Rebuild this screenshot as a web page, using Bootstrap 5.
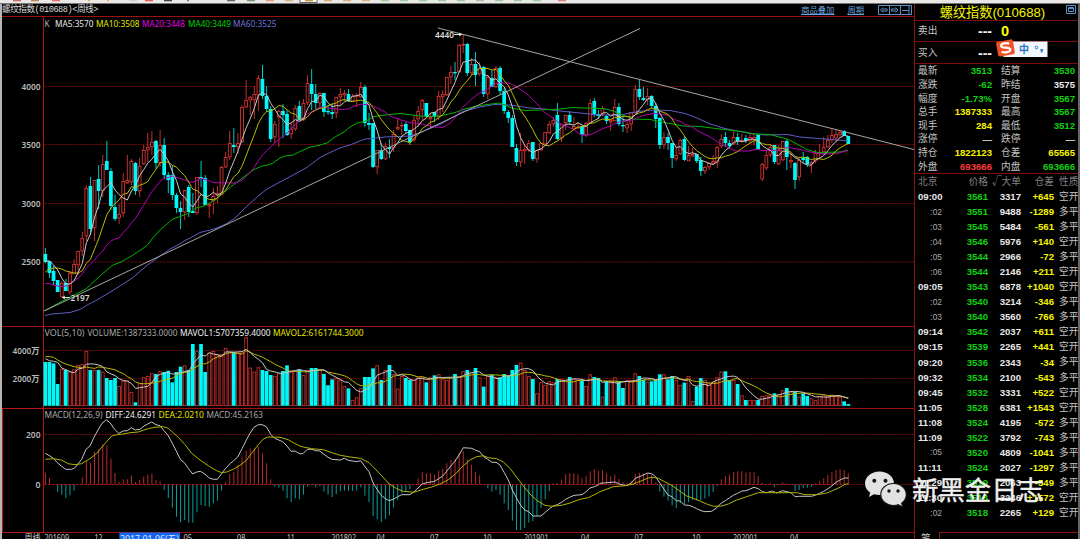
<!DOCTYPE html>
<html lang="zh-CN">
<head>
<meta charset="utf-8">
<title>螺纹指数(010688)</title>
<link href="https://cdn.jsdelivr.net/npm/bootstrap@5.3.0/dist/css/bootstrap.min.css" rel="stylesheet">
<script src="https://cdn.jsdelivr.net/npm/bootstrap@5.3.0/dist/js/bootstrap.bundle.min.js"></script>
<style>
html,body{width:1080px;height:539px;overflow:hidden;background:#000}
body{font-family:"Liberation Sans","Noto Sans CJK SC",sans-serif;font-size:10px;line-height:1;color:#c4c4c4}
.tools{height:4px;background:#e9e8e7;border-bottom:1px solid #777}
.tools svg{display:block}
.main{height:535px}
.pane{width:914px;border-left:2px solid #b8b4b0}
.pane-head{height:12px;font-size:9px;padding:1px 1px 0 0;white-space:nowrap}
.pane-head .ttl{font-family:"Liberation Mono","Noto Sans CJK SC",monospace;font-size:8.6px;color:#d8d8d8;letter-spacing:-.45px;line-height:11px}
.pane-head .lnk{color:#6ba4dc;text-decoration:underline;text-underline-offset:1px;line-height:10px;font-size:8.3px}
.pane-head .lnk2{margin:0 14px 0 13px}
.side{width:166px;border-left:1px solid #901010;border-right:2px solid #66666a}
.cjk{font-family:"Noto Sans CJK SC",sans-serif;font-weight:400;font-size:9.7px}
.side-title{height:17px;color:#f4f400;font-size:13.2px;border-bottom:1px solid #7c0d0d;line-height:17px;padding-right:8px;white-space:nowrap}
.offer{height:21.4px;border-bottom:1px solid #7c0d0d;padding-left:3px}
.offer .lab{width:45px}
.offer .dash{width:29px;text-align:right;color:#eee;font-weight:bold;font-size:14px;line-height:10px}
.offer .qty{color:#ff0;font-size:14.5px;font-weight:bold;padding-left:9px}
.quotes{height:110.5px;padding-top:.5px;border-bottom:1px solid #7c0d0d}
.qrow{display:grid;grid-template-columns:26px 48px 9px 26px 48px;height:13.65px;align-items:center;padding-left:3px;white-space:nowrap}
.num{font-weight:bold;font-size:9.6px;text-align:right}
.trow,.thead{display:grid;grid-template-columns:24px 46px 33px 33px 5px 22px;height:15.05px;align-items:center;padding-left:3px;white-space:nowrap}
.thead{height:15px;color:#808080}
.thead .sorted{margin-left:-3px}
.g{color:#10d010}.y{color:#f6f600}.w{color:#e8e8e8}.r{color:#ff3a3a}
.sec{font-size:8.4px;color:#aaa;text-align:right;font-weight:normal}
.foot{height:7px;overflow:hidden;margin-top:auto}
.foot .tab1{width:25px;border-right:1px solid #901010;padding-left:6px;line-height:12px;font-size:10px}
.foot .tab2{border-top:1px solid #901010}
.ime{position:absolute;left:995px;top:38px}
.brand{position:absolute;left:864px;top:469px;color:#f0f0f0}
.brand span{font-family:"Noto Sans CJK SC",sans-serif;font-weight:400;font-size:26.4px;line-height:40px;white-space:nowrap;margin-left:4px;-webkit-text-stroke:.35px #f0f0f0}
.win{position:absolute;right:1px;top:1px}
svg text{font-family:"Noto Sans","Noto Sans CJK SC",sans-serif}
</style>
</head>
<body class="d-flex flex-column position-relative">
<div class="tools"><svg id="tools" width="1080" height="3"></svg></div>
<div class="main d-flex">
  <div class="pane d-flex flex-column">
    <div class="pane-head d-flex align-items-start">
      <span class="ttl">螺纹指数(010688)&lt;周线&gt;</span>
      <span class="lnk ms-auto">商品叠加</span><span class="lnk lnk2">周期</span>
      <svg width="35" height="10" fill="none" stroke="#5d92c4" stroke-width="1"><path d="M.5.5h11v9H.5zM11.500.5h11v9h-11zM22.500.5h11v9h-11z"/><path d="M5 2.500 2.500 5 5 7.500M4 4h5v2H4M17.500 2.500 20 5 17.500 7.500M18.500 4h-5v2h5M24 5.500h6.500M31 1v8"/></svg>
    </div>
    <svg id="chart" width="912" height="523" viewBox="2 16 912 523"></svg>
  </div>
  <div class="side d-flex flex-column position-relative">
    <div class="side-title text-center">螺纹指数(010688)</div>
    <svg class="win" width="11" height="11" fill="none" stroke="#5d92c4"><path d="M.5.5h9v8h-9zM2.500 2.500h5v4h-5zM2.500 3.500h5"/></svg>
    <div class="offer d-flex align-items-center"><span class="lab cjk">卖出</span><span class="dash">---</span><span class="qty">0</span></div>
    <div class="offer d-flex align-items-center"><span class="lab cjk">买入</span><span class="dash">---</span><span class="qty">0</span></div>
    <div class="quotes" id="quotes"></div>
    <div class="thead cjk"><span>北京</span><span class="text-end">价格</span><span class="text-end sorted">√大单</span><span class="text-end">仓差</span><span></span><span>性质</span></div>
    <div id="trades"></div>
    <div class="foot d-flex"><div class="tab1 cjk">笔</div><div class="tab2 flex-grow-1"></div></div>
  </div>
</div>
<svg class="ime" width="54" height="22" viewBox="0 0 54 22"><path d="M10 3.500h42.500v15.500H10z" fill="#f4f7fb"/><g transform="rotate(-10 10 10)"><rect x="2" y="2.500" width="17" height="15" rx="2" fill="#ef5227"/><path d="M15 6.500C12 4.500 6.500 4.800 6.500 7.500c0 3 8.500 1.700 8.500 4.600 0 3-6.500 2.800-9 1" fill="none" stroke="#fff" stroke-width="2.200"/></g><text x="24" y="14.500" font-size="10" font-weight="700" fill="#2478c4">中</text><circle cx="41.500" cy="9.500" r="1.300" fill="none" stroke="#2478c4"/><path d="M45.500 11h2.500c.3 2-.5 3.500-2 4l-.3-1 .8-1h-1z" fill="#2478c4"/></svg>
<div class="brand d-flex align-items-center">
  <svg width="44" height="38" viewBox="0 0 44 38"><path d="M15.500 1.500C7.500 1.500 1 6.800 1 13.500c0 3.800 2 7 5.200 9.200L5 27l5-2.700c1.700.5 3.500.8 5.500.8 8 0 14.500-5.200 14.500-11.800S23.500 1.500 15.500 1.500z" fill="#e2e2e2"/><path d="M29.500 13.500c-7.200 0-12.700 4.900-12.700 11s5.500 11 12.700 11c1.700 0 3.300-.3 4.700-.8l4.600 2.500-1.200-4c2.900-2 4.700-5.100 4.700-8.700 0-6.100-5.600-11-12.800-11z" fill="#e2e2e2" stroke="#111" stroke-width="1.100"/><g fill="#151515"><circle cx="10.300" cy="10.700" r="2"/><circle cx="21.500" cy="10.700" r="2"/><circle cx="25" cy="21" r="1.700"/><circle cx="34" cy="21" r="1.700"/></g></svg>
  <span>新黑金日志</span>
</div>
<script>
// Each candle: colour, body top, body bottom, high, low (chart y)
const K=`c254 262 248 263|c261 273 261 278|c271 281 266 285|c280 292 280 292|r283 297 281 297|c283 291 279 291|r273 292 271 295|r264 274 259 274|r251 265 251 275|r238 251 232 256|r188 236 185 241|c186 229 177 235|r180 228 180 241|c179 191 165 209|r164 191 155 197|c161 170 141 170|c171 206 168 210|c207 219 195 221|r214 218 204 224|r181 213 173 217|r180 183 155 184|r161 182 159 185|c163 191 162 195|r166 191 158 197|r150 164 145 165|r147 150 133 162|r142 147 131 155|c141 163 140 169|r145 163 130 167|c145 175 138 179|c175 180 172 193|c175 195 165 200|c195 208 193 213|c208 212 201 229|r190 212 190 220|c187 212 185 217|c211 213 193 213|r177 213 177 215|c177 179 161 187|c178 205 175 205|r204 206 204 218|r196 201 188 214|r193 195 186 203|r167 195 166 195|r157 167 152 168|r143 157 131 160|c145 147 128 153|r143 147 133 154|r107 142 105 143|r100 107 80 108|r97 100 96 115|r94 100 86 119|r78 95 75 111|c79 96 65 99|c96 109 86 112|c109 139 106 142|r124 137 121 143|r111 117 110 147|c111 115 104 138|c114 135 110 136|r129 134 123 139|r108 129 105 131|c106 120 101 121|r103 120 99 121|r83 103 75 105|c84 94 69 110|c94 103 84 109|r93 103 92 108|c93 112 93 117|c111 112 105 115|c112 114 103 119|r97 113 97 118|r94 97 88 105|r93 95 90 101|c94 101 89 102|r96 101 94 102|r95 96 93 107|r87 97 82 98|c87 123 85 127|c123 125 113 130|c123 167 123 168|r150 167 150 174|c150 159 143 160|r146 159 143 160|c147 149 139 158|r134 148 130 152|r127 129 118 130|r125 126 122 135|c124 131 122 133|c130 142 130 145|r120 140 115 142|r111 119 106 127|r100 110 99 121|c103 117 103 118|r117 119 113 128|c112 117 112 122|r96 117 91 120|r94 97 90 112|r77 95 77 96|r72 77 66 84|c72 73 62 80|r45 72 44 73|r44 45 34 53|c44 73 43 76|r64 73 58 76|c64 75 52 86|r68 74 62 76|c67 94 66 97|r77 94 75 99|c78 87 70 87|r68 87 66 88|c68 91 66 95|c91 111 88 114|c112 118 110 123|c118 147 115 147|c148 162 144 166|r150 162 133 167|r149 151 146 164|r143 150 140 152|c142 159 142 161|r150 159 150 163|r143 150 143 151|r132 144 132 144|r124 133 121 134|r120 124 117 127|c115 139 103 140|r124 138 124 142|r115 123 115 130|c115 122 111 125|r126 129 117 129|r127 128 122 129|c126 135 126 143|r123 135 122 137|r103 123 99 123|c101 115 98 117|c114 116 110 119|r108 114 106 116|c116 121 115 124|r120 122 119 131|r107 121 99 121|c107 124 103 126|c125 126 117 132|r124 128 122 133|r112 124 112 131|r89 113 85 113|c89 97 80 100|c98 100 87 101|r96 100 88 105|c96 106 95 108|c106 119 103 128|c118 145 117 149|r137 145 132 149|c137 143 133 150|c143 158 143 168|r155 159 147 161|r140 154 139 155|c139 160 136 161|r155 161 146 161|r154 156 148 157|c154 161 154 163|c160 171 157 176|r167 171 166 174|r163 167 163 170|r161 163 155 165|r147 162 146 168|r139 146 134 148|c137 143 132 147|c143 146 140 148|r137 144 131 145|c137 141 133 145|r140 141 134 143|c138 141 135 143|r137 141 134 143|r137 140 134 145|c135 149 134 149|r164 179 163 181|r155 168 150 170|r147 155 144 157|c145 162 145 164|r150 164 145 165|r141 160 141 161|c141 157 139 170|r160 162 153 168|c163 180 162 189|r160 177 158 181|c158 160 152 163|c157 164 156 167|r162 164 161 173|r153 161 150 163|r152 154 144 158|r147 152 137 155|r140 147 135 148|r135 140 128 143|r134 138 130 142|r132 135 131 138|c131 136 130 136|c136 144 136 144`.split('|').map(s=>({c:s[0],v:s.slice(1).split(' ').map(Number)}));
// Volume and MACD tips, in thirds of a pixel below y=320
const V=[126,126,130,192,147,150,155,148,135,133,93,150,150,150,155,174,180,174,198,182,182,216,247,190,172,168,160,162,154,156,152,187,156,140,136,150,72,92,72,156,98,93,102,102,84,98,96,98,98,52,143,155,142,150,153,165,168,160,153,136,155,153,148,165,150,144,144,148,162,196,178,175,180,198,205,240,232,205,171,171,145,136,180,150,135,162,206,168,174,180,180,172,172,187,172,166,163,178,180,172,162,168,154,150,158,144,172,200,168,165,172,172,162,168,150,135,128,150,168,177,220,187,195,184,187,177,177,180,171,177,180,183,198,163,171,174,230,184,180,172,184,204,180,180,160,168,180,185,184,180,163,163,178,168,180,195,188,168,243,200,174,180,190,185,172,155,154,180,180,192,226,240,240,240,240,228,226,224,220,224,211,204,215,216,230,220,228,235,240,228,224,230,224,228,230,244,252];
const M=[458,474,493,516,524,534,526,512,494,472,424,428,395,388,373,376,416,459,486,478,478,466,486,480,470,464,460,480,484,510,534,563,590,607,600,608,608,577,555,558,560,550,542,512,487,462,455,435,410,392,385,385,380,400,430,478,500,503,512,535,546,535,538,524,500,495,502,498,515,524,531,522,514,512,513,513,512,502,527,546,588,598,606,597,586,563,540,520,515,508,494,476,456,460,460,464,452,446,430,420,416,398,393,418,434,455,466,492,505,515,510,524,550,570,602,630,630,624,608,604,588,564,538,514,491,490,478,462,460,460,463,475,468,454,448,452,450,460,468,464,477,487,489,482,462,458,460,460,465,487,515,530,542,556,564,548,552,547,540,541,540,535,530,516,497,478,468,464,456,454,454,458,456,457,468,488,495,490,500,495,487,490,495,513,510,504,503,500,490,484,474,465,456,450,448,450,460];
const X=i=>45.4+4.0964*i, Y=z=>320+z/3;
let o='';
const line=(x1,y1,x2,y2,c,w=1,e='')=>o+=`<line x1="${x1}" y1="${y1}" x2="${x2}" y2="${y2}" stroke="${c}" stroke-width="${w}" ${e}/>`;
const poly=(p,c,e='')=>o+=`<polyline points="${p}" fill="none" stroke="${c}" stroke-width="1" ${e}/>`;
const text=(x,y,s,c,len,size=8.6,e='')=>o+=`<text x="${x}" y="${y}" fill="${c}" font-size="${size}" ${len?`textLength="${len}" lengthAdjust="spacingAndGlyphs"`:''} ${e}>${s}</text>`;
[86.5,144.5,203.500,262,350.500,378.500,434.500,484.5].forEach(y=>line(44,y,914,y,'#5c0808',1,'stroke-dasharray="3 .6"'));
[16.500,326.500,408.500,532.5].forEach(y=>line(2,y,914,y,'#9c1010'));
line(43.500,16,43.500,532,'#b01414');
o+='<rect x="2.500" y="408.500" width="41" height="124" fill="none" stroke="#b81616"/>';
const RED='#d83434',CY='#00f8f8';
K.forEach((k,i)=>{const x=X(i),[t,b,h,l]=k.v;
 if(k.c=='c'){line(x,h,x,l,'#00c8c8');o+=`<rect x="${x-1.9}" y="${t}" width="3.700" height="${Math.max(1.3,b-t)}" fill="${CY}"/>`}
 else{line(x,h,x,t,RED,.9);line(x,b,x,l,RED,.9);o+=`<rect x="${x-1.4}" y="${t+.4}" width="2.800" height="${Math.max(.6,b-t-.6)}" fill="#000" stroke="${RED}" stroke-width=".9"/>`}
 const y=Y(V[i]);
 o+=k.c=='c'?`<rect x="${x-1.9}" y="${y}" width="3.700" height="${405.8-y}" fill="${CY}"/>`:`<rect x="${x-1.4}" y="${y+.4}" width="2.800" height="${405.2-y}" fill="#000" stroke="#c42c2c" stroke-width=".9"/>`;
 const m=Y(M[i]);line(x,484.5,x,m,m<484.5?'#c02c2c':'#0ca4a4',.95);
});
poly('44,484.5 849,484.5','#a02020','stroke-dasharray="2 2"');
// Moving averages: known leading values, then computed from the series
const ma=(s,n,seed)=>s.map((_,i)=>i<seed.length?seed[i]:s.slice(i-n+1,i+1).reduce((a,b)=>a+b)/n);
const pts=(a,f=v=>v)=>a.map((v,i)=>X(i).toFixed(1)+','+f(v).toFixed(1)).join(' ');
const cl=K.map(k=>k.c=='c'?k.v[1]:k.v[0]);
poly('45,315.5 52,314 70,312.5 80,309.5 88,304.5 96,300.5 107,294 120,286 133,277.5 147,265.5 160,256 170,249 178,245 185,240.5 192,237 200,232.5 214,229 226,224 235,218 245,208 257,197 267,189 280,182 293,175 306,168 320,157.5 330,152.5 340,148 350,145 365,139 372,138.5 385,137 410,136 420,132.5 440,124.5 455,116 463,111.5 480,107 495,104.5 510,105 530,108 545,109 560,111 580,113 600,115 620,115 638,111.5 655,110 670,110.5 685,113.5 697,118 710,124 725,128.5 740,131.5 750,133.5 765,135 787,134.5 800,137 825,139 838,140 848,141','#5e5ec6');
poly('45,310.5 56,304.5 75,294.5 86,289 101,275 107,270 113,265 121,262 127,258.5 133,255 140,250.5 147,245.5 152,239 160,230 166,225 172,219.5 180,216.5 188,213.5 196,208 204,206 215,200 228,189 241,179 253,170 262,166 268,165 273,163 280,158 285,156 293,155 300,151.5 309,147.5 318,145.5 327,143 335,137 344,132 350,127 357,123 366,121 373,117 380,115.5 400,113.5 420,116 430,116.5 440,116 455,112.5 465,109 475,106.5 487,104.5 500,103 512,108 525,110.5 540,110 560,109 573,107.5 585,108 600,108.5 606,109 613,111 625,116 633,119 650,119.5 667,123 683,126 700,126.5 720,129 745,132 755,134 770,134.5 787,139 797,144 808,150 818,152.5 840,152 848,150','#00b400');
poly(pts(ma(cl,20,[283.5,283.5,285,286,286.5,286,283.5,281,278,274,268,264,260,255,251,245,241,239,238])),'#b400b4');
poly(pts(ma(cl,10,[272,269,268,268,269,271,272,273,273])),'#baba00');
poly(pts(ma(cl,5,[261,261,265,270])),'#c8c8c8');
poly('44,311 640,28.5','#a6a6a6');poly('438,28 914,149.5','#a6a6a6');
poly(pts(ma(V,10,[110,110,112,120,127,132,136,140,142]),Y),'#baba00');
poly(pts(ma(V,5,[116,122,124,127]),Y),'#c8c8c8');
const tr=(parts,c)=>poly(parts.map((s,n)=>s.split(';').map(p=>{const[a,b]=p.split(',').map(Number);return (n*300+a/3).toFixed(1)+','+Y(b).toFixed(1)}).join(' ')).join(' '),c);
tr(['136,400;150,408;160,415;172,428;184,438;197,448;215,448;225,443;245,418;258,388;270,378;282,352;294,330;306,310;319,299;331,309;343,327;356,340;370,333;382,332;394,323;406,330;420,328;432,318;443,312;455,306;468,314;480,317;492,332;504,346;517,370;529,393;541,418;553,428;565,445;578,462;590,456;602,454;615,463;628,474;640,478;652,478;664,462;677,445;689,432;700,423;713,411;726,386;738,362;750,340;762,322;775,314;787,314;799,320;812,343;824,355;836,360;848,365;861,378;873,394;885,393;900,402','10,400;22,388;35,388;47,392;59,393;72,403;84,412;96,418;121,420;133,415;145,421;158,423;170,425;182,422;194,439;207,455;219,488;231,508;244,526;256,536;268,542;280,538;293,530;305,524;330,524;342,515;354,504;367,492;380,488;404,484;428,468;440,454;453,437;465,424;477,405;490,383;502,384;515,385;527,391;539,395;551,410;563,418;576,427;588,427;600,435;613,458;625,480;637,510;650,535;662,556;674,570;686,575;699,588;723,588;736,577;748,566;760,558;772,554;785,547;797,538;809,532;822,526;846,524;858,515;870,504;883,500;895,495;900,490','20,488;45,486;60,493;80,497;93,490;106,475;118,470;130,465;143,459;155,461;167,470;180,490;192,508;204,525;216,530;229,542;241,543;253,555;266,556;278,560;290,566;303,572;315,575;335,574;352,562;364,549;376,542;389,533;401,525;413,520;426,513;438,512;462,502;475,506;487,515;500,518;515,513;530,519;548,512;561,515;573,518;585,530;598,529;635,529;647,525;659,520;671,514;684,506;696,497;708,487;720,480;733,474;745,474'],'#c4c4c4');
tr(['136,418;160,416;184,420;205,431;225,434;245,431;270,416;290,400;306,381;319,366;335,348;350,344;370,342;390,338;415,336;432,330;445,326;465,322;490,320;505,325;517,336;535,352;555,374;575,400;600,420;625,437;650,452;665,458;680,456;700,448;720,436;738,422;755,400;775,374;790,357;803,351;840,352;865,359;880,368;900,378','10,381;35,386;70,389;96,398;121,406;150,411;182,415;207,428;219,440;244,466;268,492;290,506;310,514;342,517;370,508;395,501;420,492;445,479;465,463;490,437;510,420;530,410;550,407;565,413;590,416;610,426;630,445;650,472;670,498;690,522;710,541;735,556;755,559;785,556;810,549;840,538;865,533;895,518','0,515;40,500;75,497;100,492;125,482;145,474;160,472;175,475;195,486;215,496;235,510;260,528;280,535;300,543;320,552;340,559;365,558;385,552;410,540;440,530;475,518;510,518;540,518;590,518;615,524;650,524;680,519;700,511;720,502;735,493;745,491'],'#b4b400');
// Labels
text(44.5,27,'K','#b8b8b8',5);text(55,27,'MA5:3570','#e8e8e8',38.500);text(96,27,'MA10:3508','#e4e400',43.500);text(142,27,'MA20:3448','#e000e0',43);text(188,27,'MA40:3449','#00d400',43);text(233,27,'MA60:3525','#7070dc',43.5);
text(44.5,336,'VOL(5,10)','#a8a8a8',40);text(87.5,336,'VOLUME:1387333.0000','#a8a8a8',90);text(180,336,'MAVOL1:5707359.4000','#f0f0f0',90.5);text(273,336,'MAVOL2:6161744.3000','#e4e400',90.5);
text(44.5,418,'MACD(12,26,9)','#a8a8a8',58);text(105.5,418,'DIFF:24.6291','#f0f0f0',50.5);text(158.5,418,'DEA:2.0210','#e4e400',45.5);text(206.5,418,'MACD:45.2163','#a8a8a8',56.500);
const b='font-weight="600"';
[[90,'4000'],[148,'3500'],[206.5,'3000'],[265,'2500']].forEach(a=>text(21.5,a[0],a[1],'#b8b8b8',19,8.800,b));
text(12.5,354,'4000万','#b8b8b8',27,8.800,b);text(12.5,382,'2000万','#b8b8b8',27,8.800,b);
text(26,438,'200','#b8b8b8',14.5,8.8,b);text(35.5,488,'0','#b8b8b8',5,8.8,b);
text(70.5,300.500,'2197','#d8d8d8',19,8.8,b);poly('62,297.500 70,297.5','#ddd');poly('65,296 62.500,297.500 65,299','#ddd');
text(435,37.8,'4440','#d8d8d8',19,8.8,b);poly('454,34.500 462,34.5','#ddd');poly('459,33 461.500,34.500 459,36','#ddd');
o+='<rect x="119.300" y="532.500" width="60.700" height="8" fill="#1464f0"/>';
[[24.5,'周线',16],[44.5,'201609',24.500],[94.5,'12',8],[183.5,'05',8.500],[237,'08',8.5],[287,'11',7.500],[331.5,'201802',24.500],[376.5,'04',8.500],[430,'07',8.5],[483,'10',8.500],[524,'201901',24.500],[581,'04',8.5],[634.5,'07',8.5],[692,'10',8.500],[733,'202001',24.500],[790,'04',8.500]].forEach(a=>text(a[0],541.200,a[1],'#c8c8c8',a[2],8.8));
text(120,542,'2017.01.06(五)','#dbe8ff',59,9.5);
document.getElementById('chart').innerHTML=o;
// Sidebar
const q=[['最新','3513','g','结算','3530','g'],['涨跌','-62','g','昨结','3575','w'],['幅度','-1.73%','g','开盘','3567','g'],['总手','1387333','y','最高','3567','g'],['现手','284','y','最低','3512','g'],['涨停','—','','跌停','—',''],['持仓','1822123','y','仓差','65565','y'],['外盘','693666','r','内盘','693666','g']];
quotes.innerHTML=q.map(r=>`<div class="qrow"><span class="cjk">${r[0]}</span><span class="num ${r[2]}">${r[1]}</span><i></i><span class="cjk">${r[3]}</span><span class="num ${r[5]}">${r[4]}</span></div>`).join('');
const t=`09:00 3561 3317 +645 空开
:02 3551 9488 -1289 多平
:03 3545 5484 -561 多平
:04 3546 5976 +140 空开
:05 3544 2966 -72 多平
:06 3544 2146 +211 空开
09:05 3543 6878 +1040 空开
:02 3540 3214 -346 多平
:03 3540 3560 -766 多平
09:14 3542 2037 +611 空开
09:15 3539 2265 +441 空开
09:20 3536 2343 -34 多平
09:32 3534 2100 -543 多平
09:45 3532 3331 +522 空开
11:05 3528 6381 +1543 空开
11:08 3524 4195 -572 多平
11:09 3522 3792 -743 多平
:05 3520 4809 -1041 多平
11:11 3524 2027 -1297 多平
11:29 3519 2063 -549 多平
11:30 3518 3246 +1572 空开
:02 3518 2265 +129 空开`.split('\n').map(r=>r.split(' '));
trades.innerHTML=t.map(r=>`<div class="trow"><span class="${r[0][0]==':'?'sec':'num w text-start'}">${r[0]}</span><span class="num g">${r[1]}</span><span class="num w">${r[2]}</span><span class="num y d-flex justify-content-end">${r[3]}</span><i></i><span class="cjk">${r[4]}</span></div>`).join('');
// Lower edge of the toolbar icons
tools.innerHTML='<rect x="300" y="-3" width="17" height="5.500" fill="#f8f8f8" stroke="#666"/>'+[[13,'#c66'],[31,'#b8894a'],[52,'#e66'],[88,'#e8b050'],[107,'#e8b050'],[129,'#c8d4cc'],[145,'#e55'],[164,'#444'],[187,'#777'],[227,'#667'],[247,'#797'],[266,'#e97'],[285,'#cb7'],[305,'#c8963c'],[324,'#d8b070'],[343,'#d8b070'],[362,'#d8b878'],[381,'#a4c8a4'],[400,'#a4c8a4'],[419,'#a4c8a4'],[438,'#a4c8a4'],[457,'#a4c8a4'],[476,'#a4c8a4'],[495,'#a4c8a4'],[514,'#a4c8a4'],[533,'#a4c8a4'],[558,'#e08080']].map(a=>`<rect x="${a[0]}" y="0" width="${[88,107,187].includes(a[0])?2:8}" height="1.300" fill="${a[1]}"/>`).join('');
</script>
</body>
</html>
